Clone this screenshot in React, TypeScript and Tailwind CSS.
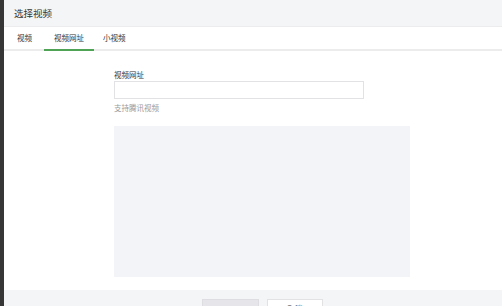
import React from "react";

export default function App() {
  const font = { fontFamily: '"Noto Sans CJK SC", "Noto Sans", sans-serif' };
  return (
    <div className="flex w-[502px] h-[306px] overflow-hidden bg-white" style={font}>
      <div className="w-[4px] shrink-0 bg-[#363636]" />
      <div className="flex flex-col flex-1 min-w-0">
        <div className="h-[27px] shrink-0 bg-[#f4f5f7] border-b border-[#ececef] flex items-center pl-[10px] text-[9.5px] text-[#333]">
          选择视频
        </div>
        <div className="h-[24px] shrink-0 border-b-2 border-[#ececec] flex items-stretch pl-[3px] text-[7.5px] text-[#333]">
          <div className="px-[10px] flex items-center">视频</div>
          <div className="ml-[2px] w-[50px] flex items-center justify-center relative">
            视频网址
            <div className="absolute left-0 right-0 bottom-[-2px] h-[2px] bg-[#4fa354]" />
          </div>
          <div className="px-[9px] flex items-center">小视频</div>
        </div>
        <div className="flex-1 pl-[110px] pt-[19px] flex flex-col">
          <div className="text-[7.5px] leading-[10px] text-[#333] h-[10px]">视频网址</div>
          <div className="mt-[1px] w-[250px] h-[18px] border border-[#e2e2e4] bg-white" />
          <div className="mt-[4px] text-[7.5px] leading-[10px] text-[#9a9a9a]">支持腾讯视频</div>
          <div className="mt-[13px] w-[296px] h-[151px] bg-[#f3f4f7]" />
        </div>
        <div className="h-[16px] shrink-0 bg-[#f4f5f7] flex justify-center gap-[8px] pt-[9px] pl-[19px] overflow-hidden">
          <div className="w-[57px] h-[22px] bg-[#e6e6ea] border border-[#dedee2] shrink-0" />
          <div className="w-[56px] h-[22px] bg-white border border-[#e2e2e4] shrink-0 flex justify-center pt-[3px] text-[7.5px] text-[#333]">
            取消
          </div>
        </div>
      </div>
    </div>
  );
}
